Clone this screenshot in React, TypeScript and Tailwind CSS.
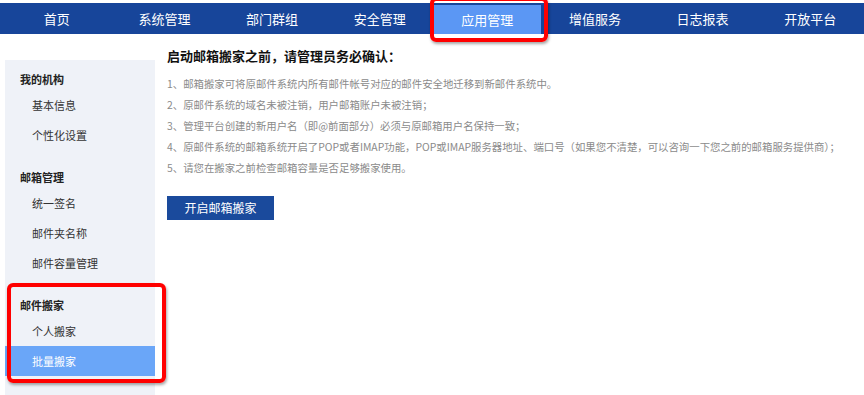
import React from 'react';

const navItems = ['首页', '系统管理', '部门群组', '安全管理', '应用管理', '增值服务', '日志报表', '开放平台'];

const sections = [
  { title: '我的机构', items: ['基本信息', '个性化设置'] },
  { title: '邮箱管理', items: ['统一签名', '邮件夹名称', '邮件容量管理'] },
  { title: '邮件搬家', items: ['个人搬家', '批量搬家'] },
];

const notes = [
  '1、邮箱搬家可将原邮件系统内所有邮件帐号对应的邮件安全地迁移到新邮件系统中。',
  '2、原邮件系统的域名未被注销，用户邮箱账户未被注销；',
  '3、管理平台创建的新用户名（即@前面部分）必须与原邮箱用户名保持一致；',
  '4、原邮件系统的邮箱系统开启了POP或者IMAP功能，POP或IMAP服务器地址、端口号（如果您不清楚，可以咨询一下您之前的邮箱服务提供商）；',
  '5、请您在搬家之前检查邮箱容量是否足够搬家使用。',
];

export default function App() {
  const active = '批量搬家';

  return (
    <div
      className="relative w-[864px] h-[395px] overflow-hidden bg-white pt-[3px]"
      style={{ fontFamily: '"Noto Sans CJK SC", "Noto Sans", sans-serif' }}
    >
      {/* Top Navigation */}
      <nav className="flex h-[31px] bg-[#17459a] pl-[3px]">
        {navItems.map((item) => (
          <div
            key={item}
            className={`flex flex-1 items-center justify-center text-[13px] text-white ${
              item === '应用管理' ? 'bg-[#5b97f4] mt-[2px]' : ''
            }`}
          >
            {item}
          </div>
        ))}
      </nav>

      <div className="flex">
        {/* Sidebar */}
        <aside className="ml-[5px] mt-[26px] w-[150px] h-[340px] bg-[#eff2f8] pt-[8px]">
          {sections.map((section, i) => (
            <div key={section.title} className={i > 0 ? 'mt-[16px]' : ''}>
              <div className="h-[22px] pl-[15px] flex items-center text-[11px] font-bold text-[#222]">
                {section.title}
              </div>
              {section.items.map((item) => (
                <div
                  key={item}
                  className={`h-[30px] pl-[27px] flex items-center text-[11px] ${
                    item === active ? 'bg-[#6aa6f8] text-white' : 'text-[#333]'
                  }`}
                >
                  {item}
                </div>
              ))}
            </div>
          ))}
        </aside>

        {/* Main content */}
        <main className="ml-[12px] mt-[13px]">
          <h2 className="text-[13px] font-bold text-[#111] leading-[18px]">
            启动邮箱搬家之前，请管理员务必确认：
          </h2>
          <ul className="mt-[8px]">
            {notes.map((n) => (
              <li key={n} className="h-[21px] text-[10.4px] leading-[21px] text-[#8a8a8a] whitespace-nowrap">
                {n}
              </li>
            ))}
          </ul>
          <button className="mt-[18px] h-[24px] w-[107px] bg-[#1a4a9c] text-white text-[12px]">
            开启邮箱搬家
          </button>
        </main>
      </div>

      {/* Annotation boxes */}
      <div className="absolute left-[430px] top-[-3px] w-[118px] h-[45px] rounded-[6px] border-4 border-[#f00] shadow-[1px_2px_3px_rgba(0,0,0,0.35)]" />
      <div className="absolute left-[7px] top-[283px] w-[159px] h-[100px] rounded-[6px] border-4 border-[#f00] shadow-[1px_2px_3px_rgba(0,0,0,0.35)]" />
    </div>
  );
}
